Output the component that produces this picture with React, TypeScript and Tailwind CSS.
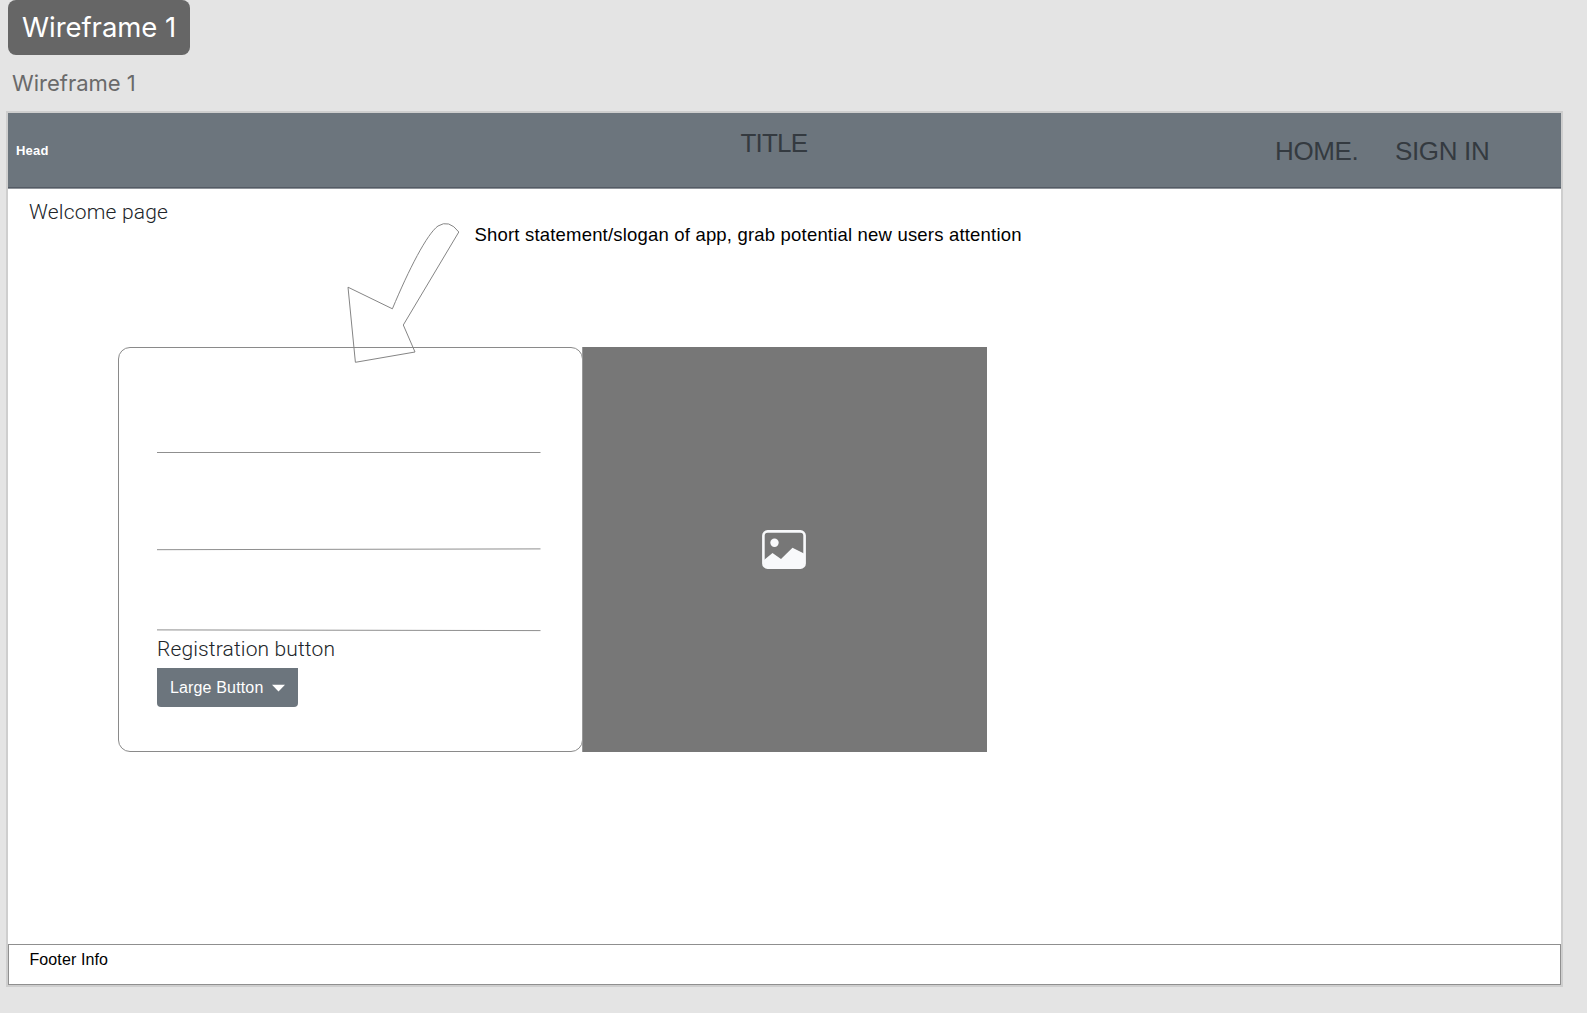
import React from "react";

const sans = "font-['Liberation_Sans',Arial,sans-serif]";
const inter = "font-['Inter',sans-serif]";
const roboto = "font-['Roboto',sans-serif]";

function Arrow() {
  return (
    <svg className="absolute left-[339px] top-[108px] z-10" width="124" height="148" viewBox="347 221 124 148" fill="none" stroke="#858585" strokeWidth="1">
      <path d="M458.8 232 L403.3 325 L415 352 L355.4 362.3 L348 287.2 L392.4 308.8 C409 269 427 234 438 226 Q449 219 458.8 232 Z" />
    </svg>
  );
}

function PictureIcon() {
  return (
    <svg width="44" height="39" viewBox="0 0 44 39">
      <rect x="1.4" y="1.4" width="41.2" height="36.2" rx="4.2" fill="none" stroke="#f8f9fb" strokeWidth="2.6" />
      <circle cx="12.5" cy="12.8" r="4.2" fill="#f8f9fb" />
      <path d="M2 30 L10.5 23 L19 29 L30.5 17.7 L42 23.5 V33 Q42 37.5 37.5 37.5 H6.5 Q2 37.5 2 33 Z" fill="#f8f9fb" />
    </svg>
  );
}

function Header() {
  return (
    <header className={`flex h-[76px] justify-between border-b border-[#8e9399] bg-[#6c757d] shadow-[inset_0_-1px_0_#535a64] ${sans}`}>
      <div className="w-[732.5px] pl-2 pt-[29px] text-[13px] font-bold leading-[18px] tracking-[0.2px] text-white">Head</div>
      <div className="flex-1 pt-[15px] text-[26px] leading-[30px] tracking-[-0.8px] text-[#343a40]">TITLE</div>
      <nav className="flex w-[286px] pt-[23px] text-[26px] leading-[30px] tracking-[-0.35px] text-[#343a40]">
        <span className="w-[120px]">HOME.</span>
        <span className="whitespace-nowrap">SIGN IN</span>
      </nav>
    </header>
  );
}

function Registration() {
  return (
    <section className="h-[405px] w-[465px] rounded-[12px] border border-[#8a8a8a] pl-[38px]">
      <svg className="block" width="386" height="286" viewBox="0 0 386 286" stroke="#8f8f8f" strokeWidth="1" fill="none">
        <path d="M-.5 104.5 H383.5 M-.5 201.7 L383.5 200.9 M-.5 281.9 L383.5 282.6" />
      </svg>
      <div className={`h-[34px] whitespace-nowrap pt-[2px] text-[21px] font-light leading-[26px] tracking-[0.13px] text-[#212529] ${roboto}`}>Registration button</div>
      <button className={`flex h-[39px] w-[141px] items-center rounded-b-[4px] bg-[#6c757d] pl-[13px] text-[16px] tracking-[0.15px] text-white ${sans}`}>
        <span className="w-[102px] text-left">Large Button</span>
        <svg width="13" height="8" viewBox="0 0 13 8"><path d="M0 .7H13L6.5 7.4Z" fill="white" /></svg>
      </button>
    </section>
  );
}

export default function App() {
  return (
    <div className="h-[1013px] w-[1587px] overflow-hidden bg-[#e4e4e4]">
      <div className={`ml-2 h-[55px] w-[182px] whitespace-nowrap rounded-[8px] bg-[#666666] pl-[14px] pt-[10px] text-[27.5px] leading-[34px] tracking-[-0.05px] text-white ${inter}`}>Wireframe 1</div>
      <div className={`h-[56px] pl-[12px] pt-[14px] text-[22px] leading-[28px] text-[#6a6a6a] ${inter}`}>Wireframe 1</div>
      <main className="relative ml-[6px] flex h-[876px] w-[1557px] flex-col border-2 border-[#cecece] bg-white">
        <Header />
        <Arrow />
        <div className="flex h-[158px]">
          <div className={`w-[466.5px] pl-[21px] pt-[10px] text-[21px] font-light leading-[26px] tracking-[0.2px] text-[#212529] ${roboto}`}>Welcome page</div>
          <p className={`whitespace-nowrap pt-[36px] text-[18.5px] leading-[20px] tracking-[0.19px] text-black ${sans}`}>Short statement/slogan of app, grab potential new users attention</p>
        </div>
        <div className="ml-[110px] flex h-[405px]">
          <Registration />
          <div className="-ml-px flex h-[405px] w-[405px] items-center justify-center border-l border-[#999999] bg-[#777777] pr-[2px]">
            <PictureIcon />
          </div>
        </div>
        <footer className={`mt-auto h-[41px] border border-[#8f8f8f] pl-[20.5px] pt-[5px] text-[16px] leading-[20px] tracking-[0.1px] text-black ${sans}`}>Footer Info</footer>
      </main>
    </div>
  );
}
